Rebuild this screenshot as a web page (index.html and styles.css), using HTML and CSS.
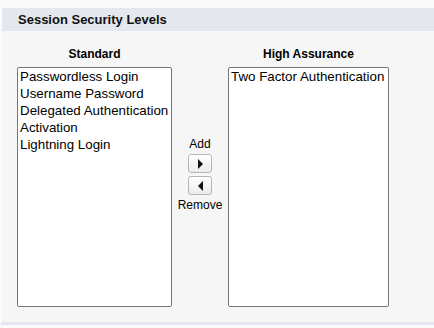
FILE: index.html
```html
<!DOCTYPE html>
<html lang="en">
<head>
    <meta charset="utf-8">
    <title>Session Security Levels</title>
    <link rel="stylesheet" href="styles.css">
</head>
<body>
<div class="panel">
    <div class="panel-head">Session Security Levels</div>
    <div class="panel-body">
        <div class="picklist">
            <div class="col col-left">
                <div class="col-title">Standard</div>
                <div class="listbox">
                    <div class="opt">Passwordless Login</div>
                    <div class="opt">Username Password</div>
                    <div class="opt">Delegated Authentication</div>
                    <div class="opt">Activation</div>
                    <div class="opt">Lightning Login</div>
                </div>
            </div>
            <div class="buttons">
                <div class="btn-label">Add</div>
                <a href="#" class="arrow-btn"><span class="tri tri-right"></span></a>
                <a href="#" class="arrow-btn"><span class="tri tri-left"></span></a>
                <div class="btn-label">Remove</div>
            </div>
            <div class="col col-right">
                <div class="col-title">High Assurance</div>
                <div class="listbox">
                    <div class="opt">Two Factor Authentication</div>
                </div>
            </div>
        </div>
    </div>
</div>
</body>
</html>
```

FILE: styles.css
```css
body {
    margin: 0;
    background: #fafafa;
    font-family: Arial, "Liberation Sans", sans-serif;
    color: #000;
}

.panel {
    margin-top: 8px;
    background: #f6f6f6;
    border-left: 2px solid #fbfbfb;
    border-bottom: 3px solid #e4e8ee;
    height: 317px;
    box-sizing: border-box;
}

.panel-head {
    background: #e4e8ee;
    height: 23px;
    line-height: 23px;
    padding-left: 16px;
    font-size: 13px;
    font-weight: bold;
    color: #111;
}

.panel-body {
    padding: 0 0 0 15px;
}

.picklist {
    display: flex;
    align-items: flex-start;
}

.col-title {
    font-size: 12px;
    font-weight: bold;
    text-align: center;
    height: 14px;
    line-height: 14px;
    margin-top: 16px;
    margin-bottom: 6px;
}

.col-left {
    width: 155px;
}

.col-right {
    width: 161px;
}

.listbox {
    height: 240px;
    box-sizing: border-box;
    background: #fff;
    border: 1px solid #777;
    border-radius: 2px;
    padding: 0 2px;
}

.opt {
    font-size: 13.33px;
    line-height: 17px;
    white-space: nowrap;
}

.buttons {
    width: 56px;
    display: flex;
    flex-direction: column;
    align-items: center;
    padding-top: 106px;
    gap: 3px;
}

.btn-label {
    font-size: 12px;
    line-height: 14px;
}

.arrow-btn {
    display: flex;
    align-items: center;
    justify-content: center;
    width: 22px;
    height: 17px;
    border: 1px solid #b5b5b5;
    border-radius: 3px;
    background: linear-gradient(#ffffff, #ececec);
}

.tri {
    width: 0;
    height: 0;
    border-top: 5px solid transparent;
    border-bottom: 5px solid transparent;
}

.tri-right {
    border-left: 5px solid #111;
    margin-left: 1px;
}

.tri-left {
    border-right: 5px solid #111;
}
```
